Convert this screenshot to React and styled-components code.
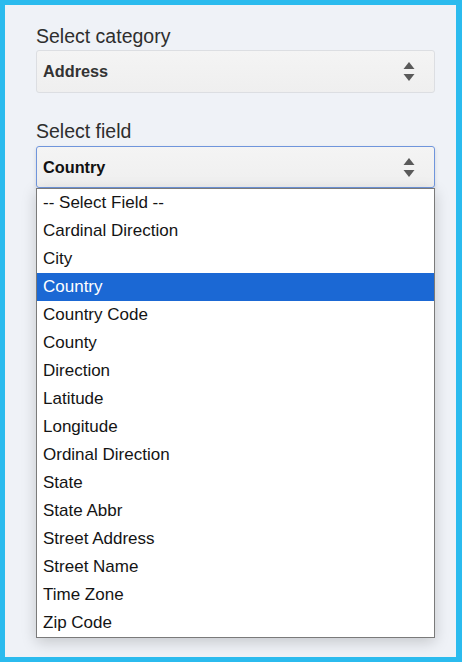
import React from "react";
import styled, { createGlobalStyle } from "styled-components";

const GlobalStyle = createGlobalStyle`
  html, body {
    margin: 0;
    padding: 0;
    background: #2bbbee;
  }
  body {
    font-family: "Liberation Sans", Arial, sans-serif;
  }
`;

const Frame = styled.div`
  padding: 5px 6px 5px 5px;
  height: 662px;
  box-sizing: border-box;
`;

const Panel = styled.div`
  background: #eff2f7;
  height: 100%;
  box-sizing: border-box;
  padding: 20px 21px 0 31px;
  display: flex;
  flex-direction: column;
`;

const Field = styled.div`
  display: flex;
  flex-direction: column;
  margin-bottom: ${(props) => props.$gap || 0}px;
`;

const Label = styled.label`
  font-size: 19.5px;
  line-height: 23px;
  color: #2e2e2e;
  margin-bottom: ${(props) => props.$space || 2}px;
`;

const SelectBox = styled.div`
  height: ${(props) => (props.$focused ? 42 : 43)}px;
  box-sizing: border-box;
  display: flex;
  align-items: center;
  justify-content: space-between;
  padding: 0 19px 0 6px;
  border: 1px solid ${(props) => (props.$focused ? "#6f95dc" : "#dcdee2")};
  border-radius: 3px;
  background: linear-gradient(#f4f4f4, #efefef);
  font-size: 16.3px;
  font-weight: bold;
  color: ${(props) => (props.$focused ? "#111" : "#333")};
  box-shadow: ${(props) =>
    props.$focused ? "0 2px 4px rgba(0,0,0,0.12)" : "none"};
`;

const Arrows = () => (
  <svg width="12" height="19" viewBox="0 0 12 19">
    <path d="M6 0 L11.5 7 L0.5 7 Z" fill="#5a5a5a" />
    <path d="M6 19 L11.5 12 L0.5 12 Z" fill="#5a5a5a" />
  </svg>
);

const OptionList = styled.ul`
  list-style: none;
  margin: 0;
  padding: 0;
  background: #fff;
  border: 1px solid #7a7a7a;
  box-shadow: 0 4px 14px rgba(0, 0, 0, 0.18);
`;

const Option = styled.li`
  height: 28px;
  line-height: 28px;
  padding: 0 6px;
  font-size: 17px;
  color: ${(props) => (props.$selected ? "#fff" : "#141414")};
  background: ${(props) => (props.$selected ? "#1b68d4" : "transparent")};
  white-space: nowrap;
`;

const fields = [
  "-- Select Field --",
  "Cardinal Direction",
  "City",
  "Country",
  "Country Code",
  "County",
  "Direction",
  "Latitude",
  "Longitude",
  "Ordinal Direction",
  "State",
  "State Abbr",
  "Street Address",
  "Street Name",
  "Time Zone",
  "Zip Code",
];

export default function App() {
  const selected = "Country";
  return (
    <>
      <GlobalStyle />
      <Frame>
        <Panel>
          <Field $gap={27}>
            <Label>Select category</Label>
            <SelectBox>
              <span>Address</span>
              <Arrows />
            </SelectBox>
          </Field>
          <Field>
            <Label $space={3}>Select field</Label>
            <SelectBox $focused>
              <span>{selected}</span>
              <Arrows />
            </SelectBox>
            <OptionList>
              {fields.map((f) => (
                <Option key={f} $selected={f === selected}>
                  {f}
                </Option>
              ))}
            </OptionList>
          </Field>
        </Panel>
      </Frame>
    </>
  );
}
